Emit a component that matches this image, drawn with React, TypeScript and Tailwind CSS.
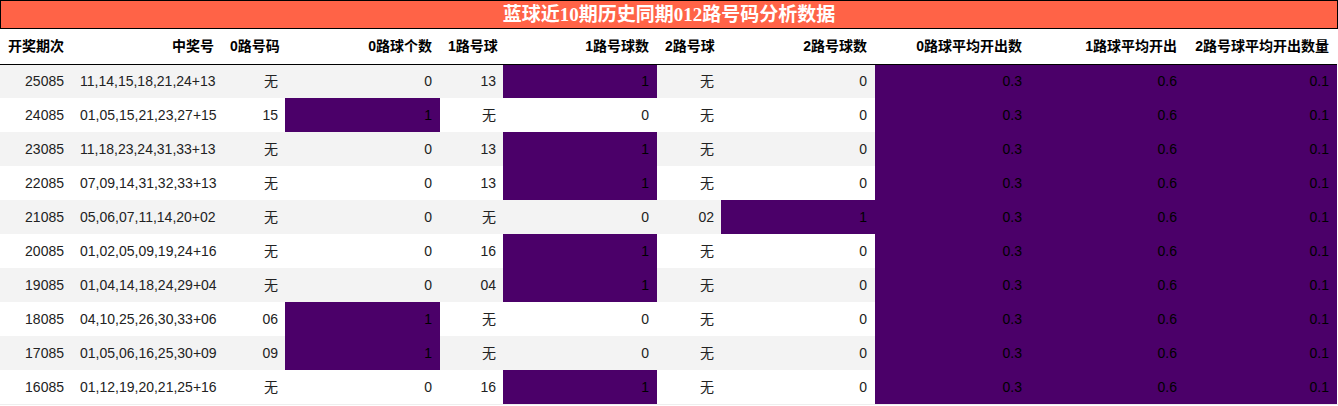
import React from "react";

type Row = {
  q: string;
  n: string;
  z0: string;
  c0: number;
  z1: string;
  c1: number;
  z2: string;
  c2: number;
};

const rows: Row[] = [
  { q: "25085", n: "11,14,15,18,21,24+13", z0: "无", c0: 0, z1: "13", c1: 1, z2: "无", c2: 0 },
  { q: "24085", n: "01,05,15,21,23,27+15", z0: "15", c0: 1, z1: "无", c1: 0, z2: "无", c2: 0 },
  { q: "23085", n: "11,18,23,24,31,33+13", z0: "无", c0: 0, z1: "13", c1: 1, z2: "无", c2: 0 },
  { q: "22085", n: "07,09,14,31,32,33+13", z0: "无", c0: 0, z1: "13", c1: 1, z2: "无", c2: 0 },
  { q: "21085", n: "05,06,07,11,14,20+02", z0: "无", c0: 0, z1: "无", c1: 0, z2: "02", c2: 1 },
  { q: "20085", n: "01,02,05,09,19,24+16", z0: "无", c0: 0, z1: "16", c1: 1, z2: "无", c2: 0 },
  { q: "19085", n: "01,04,14,18,24,29+04", z0: "无", c0: 0, z1: "04", c1: 1, z2: "无", c2: 0 },
  { q: "18085", n: "04,10,25,26,30,33+06", z0: "06", c0: 1, z1: "无", c1: 0, z2: "无", c2: 0 },
  { q: "17085", n: "01,05,06,16,25,30+09", z0: "09", c0: 1, z1: "无", c1: 0, z2: "无", c2: 0 },
  { q: "16085", n: "01,12,19,20,21,25+16", z0: "无", c0: 0, z1: "16", c1: 1, z2: "无", c2: 0 },
];

const headers = [
  "开奖期次",
  "中奖号",
  "0路号码",
  "0路球个数",
  "1路号球",
  "1路号球数",
  "2路号球",
  "2路号球数",
  "0路球平均开出数",
  "1路球平均开出",
  "2路号球平均开出数量",
];

const widths = [72, 150, 63, 155, 63, 154, 64, 154, 155, 155, 152];

const PURPLE = "bg-[#4b0069]";

export default function App() {
  return (
    <div
      className="w-[1338px] bg-white text-[#222]"
      style={{ fontFamily: '"Liberation Sans", Arial, "Noto Sans CJK SC", sans-serif' }}
    >
      <div
        className="h-[29px] border border-black bg-[#ff6347] text-white font-bold text-[19px] leading-[27px] text-center"
        style={{ fontFamily: '"Liberation Serif", "Noto Sans CJK SC", serif' }}
      >
        蓝球近10期历史同期012路号码分析数据
      </div>
      <table className="table-fixed border-collapse w-[1337px] text-[14px]">
        <colgroup>
          {widths.map((w, i) => (
            <col key={i} style={{ width: w }} />
          ))}
        </colgroup>
        <thead>
          <tr className="h-[35px] border-b border-black">
            {headers.map((h, i) => (
              <th key={i} className="font-bold text-right px-[8px] whitespace-nowrap text-black">
                {h}
              </th>
            ))}
          </tr>
        </thead>
        <tbody>
          {rows.map((r, i) => {
            const bg = i % 2 === 0 ? "bg-[#f3f3f3]" : "bg-white";
            return (
              <tr key={r.q} className={`h-[34px] ${bg}`}>
                <td className="text-right px-[8px]">{r.q}</td>
                <td className="text-right px-[8px] whitespace-nowrap">{r.n}</td>
                <td className="text-right px-[7px]">{r.z0}</td>
                <td className={`text-right px-[8px] ${r.c0 ? PURPLE + " text-black" : ""}`}>{r.c0}</td>
                <td className="text-right px-[7px]">{r.z1}</td>
                <td className={`text-right px-[8px] ${r.c1 ? PURPLE + " text-black" : ""}`}>{r.c1}</td>
                <td className="text-right px-[7px]">{r.z2}</td>
                <td className={`text-right px-[8px] ${r.c2 ? PURPLE + " text-black" : ""}`}>{r.c2}</td>
                <td className={`text-right px-[8px] ${PURPLE} text-black`}>0.3</td>
                <td className={`text-right px-[8px] ${PURPLE} text-black`}>0.6</td>
                <td className={`text-right px-[8px] ${PURPLE} text-black`}>0.1</td>
              </tr>
            );
          })}
        </tbody>
      </table>
      <div className="h-px w-[1338px] bg-[#eeeeee]" />
    </div>
  );
}
